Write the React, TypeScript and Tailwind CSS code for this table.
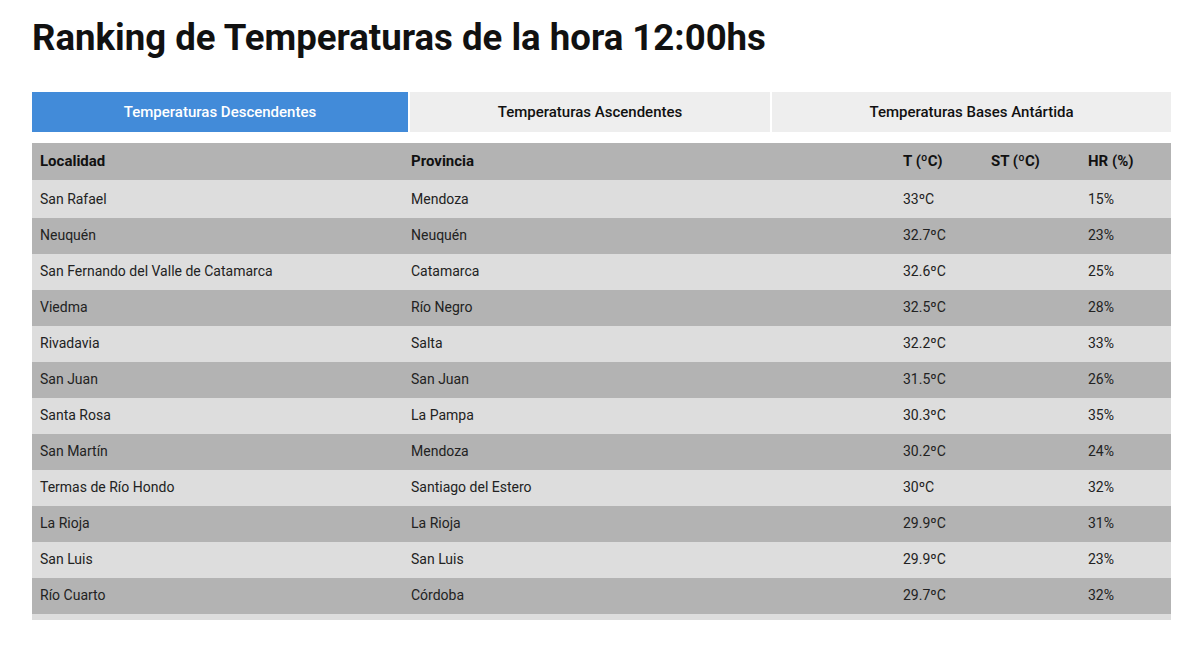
const rows: [string, string, string, string, string][] = [
  ["San Rafael", "Mendoza", "33ºC", "", "15%"],
  ["Neuquén", "Neuquén", "32.7ºC", "", "23%"],
  ["San Fernando del Valle de Catamarca", "Catamarca", "32.6ºC", "", "25%"],
  ["Viedma", "Río Negro", "32.5ºC", "", "28%"],
  ["Rivadavia", "Salta", "32.2ºC", "", "33%"],
  ["San Juan", "San Juan", "31.5ºC", "", "26%"],
  ["Santa Rosa", "La Pampa", "30.3ºC", "", "35%"],
  ["San Martín", "Mendoza", "30.2ºC", "", "24%"],
  ["Termas de Río Hondo", "Santiago del Estero", "30ºC", "", "32%"],
  ["La Rioja", "La Rioja", "29.9ºC", "", "31%"],
  ["San Luis", "San Luis", "29.9ºC", "", "23%"],
  ["Río Cuarto", "Córdoba", "29.7ºC", "", "32%"],
];

const tabs = ["Temperaturas Descendentes", "Temperaturas Ascendentes", "Temperaturas Bases Antártida"];

export default function App() {
  return (
    <div className="min-h-[657px] bg-white pl-8 pr-[11px] pt-[16px] text-[#222]" style={{ fontFamily: "Roboto, 'Liberation Sans', sans-serif" }}>
      <h1 className="text-[36.6px] font-bold leading-[44px] text-[#111]">Ranking de Temperaturas de la hora 12:00hs</h1>

      <div className="mt-[32px] flex gap-[2px]">
        {tabs.map((tab, i) => (
          <button
            key={tab}
            className={
              i === 0
                ? "h-10 w-[376px] bg-[#428bd9] text-[15px] font-medium text-white"
                : i === 1
                  ? "h-10 w-[360px] bg-[#eeeeee] text-[15px] font-medium text-[#111]"
                  : "h-10 flex-1 bg-[#eeeeee] text-[15px] font-medium text-[#111]"
            }
          >
            {tab}
          </button>
        ))}
      </div>

      <div className="mt-[11px]">
        <div className="flex h-[37px] items-center bg-[#b3b3b3] text-[15px] font-bold text-[#111]">
          <div className="w-[371px] pl-2">Localidad</div>
          <div className="w-[492px] pl-2">Provincia</div>
          <div className="w-[88px] pl-2">T (ºC)</div>
          <div className="w-[97px] pl-2">ST (ºC)</div>
          <div className="flex-1 pl-2">HR (%)</div>
        </div>
        {rows.map((r, i) => (
          <div
            key={i}
            className={`flex items-center text-sm ${i % 2 === 0 ? "bg-[#dddddd]" : "bg-[#b3b3b3]"} ${i === 0 ? "h-[38px]" : "h-9 pb-[2px]"}`}
          >
            <div className="w-[371px] pl-2">{r[0]}</div>
            <div className="w-[492px] pl-2">{r[1]}</div>
            <div className="w-[88px] pl-2">{r[2]}</div>
            <div className="w-[97px] pl-2">{r[3]}</div>
            <div className="flex-1 pl-2">{r[4]}</div>
          </div>
        ))}
        <div className="h-[6px] bg-[#dddddd]" />
      </div>
    </div>
  );
}
